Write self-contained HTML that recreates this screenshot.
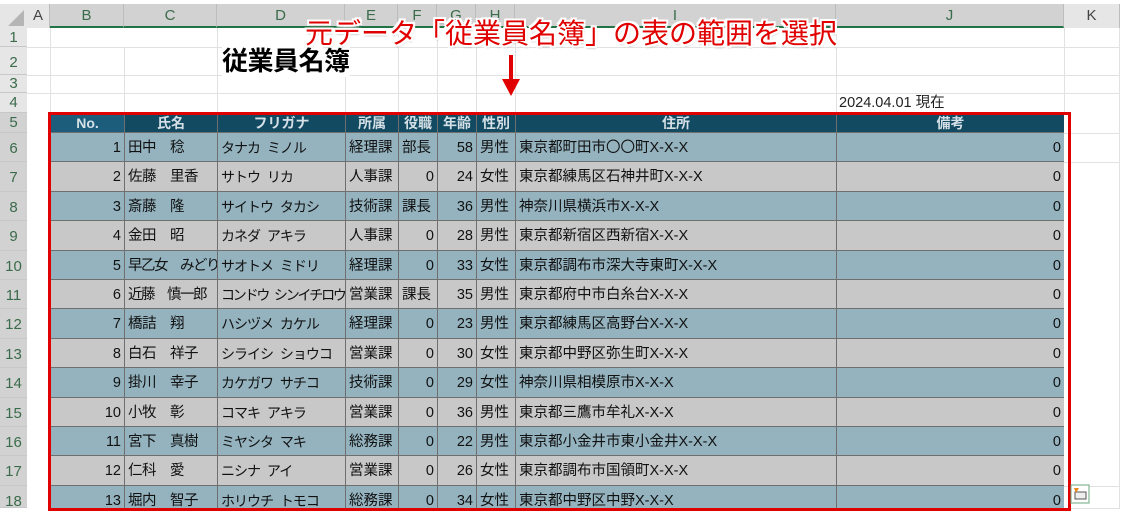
<!DOCTYPE html>
<html><head><meta charset="utf-8">
<style>
*{margin:0;padding:0;box-sizing:border-box}
body{width:1143px;height:515px;overflow:hidden;background:#fff;position:relative;font-family:"Liberation Sans","Noto Sans CJK JP",sans-serif;}
.a{position:absolute}
.ch{position:absolute;top:4px;height:24px;background:#d2d2d2;border-right:1px solid #bdbdbd;color:#3a6b4a;font-size:15px;text-align:center;line-height:24px;border-bottom:2px solid #217346}
.rh{position:absolute;left:0;width:27px;background:#e6e6e6;border-bottom:1px solid #c8c8c8;color:#3a6b4a;font-size:15px;text-align:center}
.vl{position:absolute;top:28px;width:1px;height:85px;background:#e1e1e1}
.hl{position:absolute;left:27px;width:1093px;height:1px;background:#e1e1e1}
.g{position:absolute;left:50px;top:113px;width:1014px;height:395px;overflow:hidden;display:grid;grid-template-columns:73px 92px 127px 52px 38px 38px 38px 320px 227px;grid-auto-rows:28.4px;grid-template-rows:19px;gap:1px;background:#6f6f6f;border-left:1px solid #6f6f6f;font-size:14.5px;color:#111}
.g div{white-space:nowrap;overflow:hidden;padding:0 3px;line-height:30px}
.k{letter-spacing:-1px;font-size:14px;word-spacing:4px}
.n{letter-spacing:-0.5px}
.h{background:#124a62;color:#d5e0e6;font-weight:bold;text-align:center;line-height:16px!important;padding-top:2px!important;font-size:14px}
.h1{background:#1d5d7c}
.o{background:#94b3bf}
.e{background:#c8c8c8}
.r{text-align:right}
</style></head><body>
<div class="a" style="left:0;top:4px;width:27px;height:24px;background:#e6e6e6"></div>
<svg class="a" style="left:8px;top:10px" width="16" height="16"><polygon points="16,0 16,16 0,16" fill="#b5b5b5"/></svg>
<div class="ch" style="left:27px;width:23px;background:#e6e6e6;border-bottom:none;color:#444">A</div>
<div class="ch" style="left:50px;width:74px">B</div>
<div class="ch" style="left:124px;width:93px">C</div>
<div class="ch" style="left:217px;width:128px">D</div>
<div class="ch" style="left:345px;width:53px">E</div>
<div class="ch" style="left:398px;width:39px">F</div>
<div class="ch" style="left:437px;width:39px">G</div>
<div class="ch" style="left:476px;width:39px">H</div>
<div class="ch" style="left:515px;width:321px">I</div>
<div class="ch" style="left:836px;width:228px">J</div>
<div class="ch" style="left:1064px;width:56px;background:#e6e6e6;border-bottom:none;color:#444">K</div>

<div class="rh" style="top:28px;height:19px;line-height:19px">1</div>
<div class="rh" style="top:47px;height:28px;line-height:32px">2</div>
<div class="rh" style="top:75px;height:18px;line-height:18px">3</div>
<div class="rh" style="top:93px;height:20px;line-height:20px">4</div>
<div class="a" style="left:0;top:113px;width:27px;height:402px;background:#d2d2d2;border-right:2px solid #217346"></div>
<div class="rh" style="top:113px;height:20px;line-height:20px;background:#d2d2d2">5</div>
<div class="rh" style="top:133px;height:29.4px;line-height:32px;background:#d2d2d2">6</div>
<div class="rh" style="top:162.4px;height:29.4px;line-height:32px;background:#d2d2d2">7</div>
<div class="rh" style="top:191.8px;height:29.4px;line-height:32px;background:#d2d2d2">8</div>
<div class="rh" style="top:221.2px;height:29.4px;line-height:32px;background:#d2d2d2">9</div>
<div class="rh" style="top:250.6px;height:29.4px;line-height:32px;background:#d2d2d2">10</div>
<div class="rh" style="top:280px;height:29.4px;line-height:32px;background:#d2d2d2">11</div>
<div class="rh" style="top:309.4px;height:29.4px;line-height:32px;background:#d2d2d2">12</div>
<div class="rh" style="top:338.8px;height:29.4px;line-height:32px;background:#d2d2d2">13</div>
<div class="rh" style="top:368.2px;height:29.4px;line-height:32px;background:#d2d2d2">14</div>
<div class="rh" style="top:397.6px;height:29.4px;line-height:32px;background:#d2d2d2">15</div>
<div class="rh" style="top:427px;height:29.4px;line-height:32px;background:#d2d2d2">16</div>
<div class="rh" style="top:456.4px;height:29.4px;line-height:32px;background:#d2d2d2">17</div>
<div class="rh" style="top:485.8px;height:22px;line-height:32px;background:#d2d2d2;overflow:hidden">18</div>
<div class="a" style="left:0;top:508px;width:1143px;height:7px;background:#fff"></div>

<div class="hl" style="top:47px"></div><div class="hl" style="top:75px"></div><div class="hl" style="top:93px"></div>
<div class="hl" style="left:1064px;width:56px;top:133px"></div><div class="hl" style="left:1064px;width:56px;top:162px"></div>
<div class="hl" style="left:1064px;width:56px;top:486px"></div><div class="hl" style="left:1064px;width:56px;top:508px"></div>
<div class="a" style="left:1119px;top:28px;width:1px;height:480px;background:#e1e1e1"></div>
<div class="vl" style="left:50px"></div><div class="vl" style="left:124px;top:47px;height:66px"></div><div class="vl" style="left:217px"></div>
<div class="vl" style="left:345px"></div><div class="vl" style="left:398px"></div><div class="vl" style="left:437px"></div><div class="vl" style="left:476px"></div><div class="vl" style="left:515px"></div><div class="vl" style="left:836px"></div><div class="vl" style="left:1064px"></div>

<div class="a" style="left:222px;top:45px;font-size:26px;font-weight:bold;color:#000;background:#fff;line-height:32px;letter-spacing:-0.5px">従業員名簿</div>
<div class="a" style="left:839px;top:94px;font-size:14.5px;color:#222;line-height:18px">2024.04.01 現在</div>

<div class="g">
<div class="h h1">No.</div><div class="h">氏名</div><div class="h">フリガナ</div><div class="h">所属</div><div class="h">役職</div><div class="h">年齢</div><div class="h">性別</div><div class="h">住所</div><div class="h">備考</div>
<div class="o r">1</div><div class="o n">田中　稔</div><div class="o k">タナカ ミノル</div><div class="o">経理課</div><div class="o">部長</div><div class="o r">58</div><div class="o">男性</div><div class="o">東京都町田市〇〇町X-X-X</div><div class="o r">0</div>
<div class="e r">2</div><div class="e n">佐藤　里香</div><div class="e k">サトウ リカ</div><div class="e">人事課</div><div class="e r">0</div><div class="e r">24</div><div class="e">女性</div><div class="e">東京都練馬区石神井町X-X-X</div><div class="e r">0</div>
<div class="o r">3</div><div class="o n">斎藤　隆</div><div class="o k">サイトウ タカシ</div><div class="o">技術課</div><div class="o">課長</div><div class="o r">36</div><div class="o">男性</div><div class="o">神奈川県横浜市X-X-X</div><div class="o r">0</div>
<div class="e r">4</div><div class="e n">金田　昭</div><div class="e k">カネダ アキラ</div><div class="e">人事課</div><div class="e r">0</div><div class="e r">28</div><div class="e">男性</div><div class="e">東京都新宿区西新宿X-X-X</div><div class="e r">0</div>
<div class="o r">5</div><div class="o n" style="letter-spacing:-1.5px">早乙女　みどり</div><div class="o k">サオトメ ミドリ</div><div class="o">経理課</div><div class="o r">0</div><div class="o r">33</div><div class="o">女性</div><div class="o">東京都調布市深大寺東町X-X-X</div><div class="o r">0</div>
<div class="e r">6</div><div class="e n" style="letter-spacing:-1.5px">近藤　慎一郎</div><div class="e k" style="letter-spacing:-2.2px">コンドウ シンイチロウ</div><div class="e">営業課</div><div class="e">課長</div><div class="e r">35</div><div class="e">男性</div><div class="e">東京都府中市白糸台X-X-X</div><div class="e r">0</div>
<div class="o r">7</div><div class="o n">橋詰　翔</div><div class="o k">ハシヅメ カケル</div><div class="o">経理課</div><div class="o r">0</div><div class="o r">23</div><div class="o">男性</div><div class="o">東京都練馬区高野台X-X-X</div><div class="o r">0</div>
<div class="e r">8</div><div class="e n">白石　祥子</div><div class="e k">シライシ ショウコ</div><div class="e">営業課</div><div class="e r">0</div><div class="e r">30</div><div class="e">女性</div><div class="e">東京都中野区弥生町X-X-X</div><div class="e r">0</div>
<div class="o r">9</div><div class="o n">掛川　幸子</div><div class="o k">カケガワ サチコ</div><div class="o">技術課</div><div class="o r">0</div><div class="o r">29</div><div class="o">女性</div><div class="o">神奈川県相模原市X-X-X</div><div class="o r">0</div>
<div class="e r">10</div><div class="e n">小牧　彰</div><div class="e k">コマキ アキラ</div><div class="e">営業課</div><div class="e r">0</div><div class="e r">36</div><div class="e">男性</div><div class="e">東京都三鷹市牟礼X-X-X</div><div class="e r">0</div>
<div class="o r">11</div><div class="o n">宮下　真樹</div><div class="o k">ミヤシタ マキ</div><div class="o">総務課</div><div class="o r">0</div><div class="o r">22</div><div class="o">男性</div><div class="o">東京都小金井市東小金井X-X-X</div><div class="o r">0</div>
<div class="e r">12</div><div class="e n">仁科　愛</div><div class="e k">ニシナ アイ</div><div class="e">営業課</div><div class="e r">0</div><div class="e r">26</div><div class="e">女性</div><div class="e">東京都調布市国領町X-X-X</div><div class="e r">0</div>
<div class="o r">13</div><div class="o n">堀内　智子</div><div class="o k">ホリウチ トモコ</div><div class="o">総務課</div><div class="o r">0</div><div class="o r">34</div><div class="o">女性</div><div class="o">東京都中野区中野X-X-X</div><div class="o r">0</div>
</div>

<div class="a" style="left:48px;top:112px;width:1023px;height:399px;border:3px solid #e00000"></div>

<svg class="a" style="left:1070px;top:484px" width="20" height="20"><rect x="1" y="1" width="18" height="18" fill="#fff" stroke="#6aa882"/><rect x="5" y="8" width="11" height="7" fill="#eee" stroke="#555"/><path d="M4 4 L9 4 L6 9 Z" fill="#e88a1a"/></svg>

<svg class="a" style="left:500px;top:55px" width="22" height="42"><rect x="9" y="0" width="4" height="28" fill="#e00000"/><polygon points="2,24 20,24 11,41" fill="#e00000"/></svg>

<div class="a" style="left:305px;top:16px;font-size:28px;line-height:36px;color:#e00000;white-space:nowrap;text-shadow:2px 0 #fff,-2px 0 #fff,0 2px #fff,0 -2px #fff,2px 2px #fff,-2px -2px #fff,2px -2px #fff,-2px 2px #fff,1px 2px 2px #999">元データ「従業員名簿」の表の範囲を選択</div>
</body></html>
